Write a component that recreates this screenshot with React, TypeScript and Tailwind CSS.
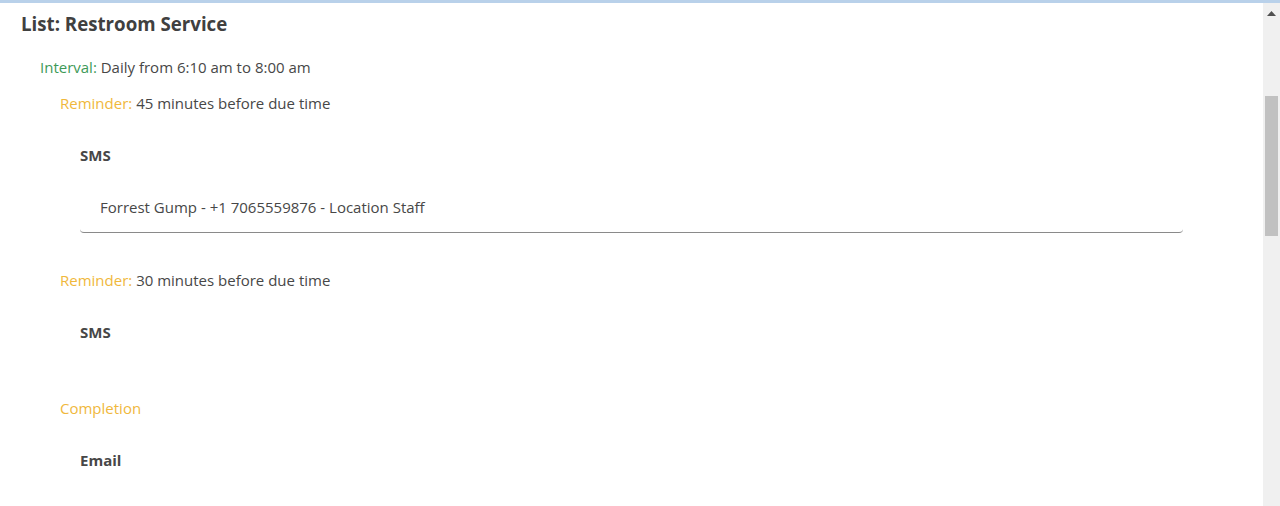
const font = { fontFamily: '"Open Sans", "Noto Sans", sans-serif' };

const Label = ({ color, children }: { color: string; children: React.ReactNode }) => (
  <span className={color}>{children}</span>
);

export default function App() {
  return (
    <div className="flex h-[506px] w-[1280px] flex-col overflow-hidden bg-white text-[#474747]" style={font}>
      <div className="h-[3px] w-full shrink-0 bg-[#b9d1ea]" />
      <div className="flex min-h-0 flex-1">
        <main className="flex-1 pl-[21px] pr-[80px] text-[15px] leading-[20px]">
          <h1 className="mt-[8px] text-[18.7px] font-bold leading-[26px] text-[#404040]">List: Restroom Service</h1>

          <div className="ml-[19px] mt-[20px]">
            <Label color="text-[#3d9a58]">Interval:</Label> Daily from 6:10 am to 8:00 am
          </div>

          <div className="ml-[39px] mt-[16px]">
            <Label color="text-[#f0b83c]">Reminder:</Label> 45 minutes before due time
          </div>
          <div className="ml-[59px] mt-[32px] font-bold">SMS</div>
          <div className="ml-[59px] mt-[22px] h-[46px] rounded-b-[4px] border-b border-[#8a8a8a] pl-[20px] pt-[10px]">
            Forrest Gump - +1 7065559876 - Location Staff
          </div>

          <div className="ml-[39px] mt-[37px]">
            <Label color="text-[#f0b83c]">Reminder:</Label> 30 minutes before due time
          </div>
          <div className="ml-[59px] mt-[32px] font-bold">SMS</div>

          <div className="ml-[39px] mt-[56px] text-[#f0b83c]">Completion</div>
          <div className="ml-[59px] mt-[32px] font-bold">Email</div>
        </main>

        <div className="flex w-[17px] shrink-0 flex-col items-center bg-[#f0f0f0]">
          <svg className="mt-[8px]" width="9" height="5" viewBox="0 0 9 5">
            <path d="M0 5 L4.5 0 L9 5 Z" fill="#505050" />
          </svg>
          <div className="mt-[80px] h-[140px] w-[13px] bg-[#c1c1c1]" />
        </div>
      </div>
    </div>
  );
}
